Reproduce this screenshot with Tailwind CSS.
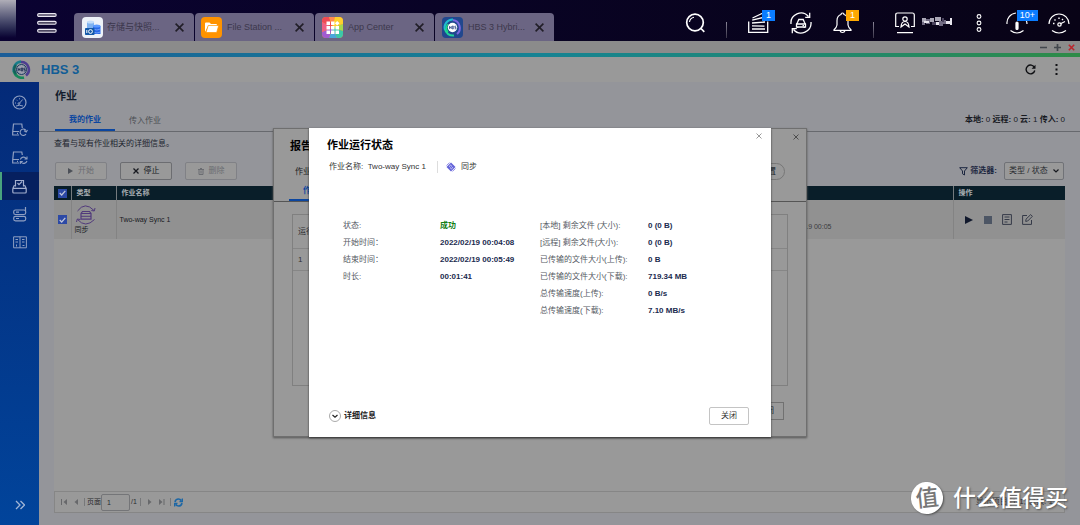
<!DOCTYPE html>
<html lang="zh-CN">
<head>
<meta charset="utf-8">
<meta name="viewport" content="width=device-width, initial-scale=1">
<title>HBS 3 Hybrid Backup Sync</title>
<script src="https://cdn.jsdelivr.net/npm/@tailwindcss/browser@4"></script>
</head>
<body class="relative flex h-screen flex-col overflow-hidden bg-[#94959a] font-['Liberation_Sans','Noto_Sans_CJK_SC',sans-serif] text-[8px] leading-3 text-[#17191f]">

<header class="flex h-[41px] shrink-0 bg-linear-to-r from-[#0a0231] to-[#080316]">
  <div class="h-[38px] w-4 bg-linear-to-b from-[#b0aeb8] to-[#0a0231]"></div>
  <button aria-label="主菜单" class="ml-[21px] mr-[17px] mt-1 w-5">
    <svg viewBox="0 0 20 22" class="h-[22px] w-5" fill="#4b4660" stroke="#e9e7f0" stroke-width="1.1"><rect x=".6" y="1.6" width="18.6" height="2.8" rx="1.4"/><rect x=".6" y="9.4" width="18.6" height="2.8" rx="1.4"/><rect x=".6" y="17.4" width="18.6" height="2.8" rx="1.4"/></svg>
  </button>
  <nav class="flex gap-px self-end text-[9px] text-[#3c374c]">
    <div class="flex h-7 w-[120px] items-center rounded-t bg-[#6b6583] pl-2 pr-2">
      <svg viewBox="0 0 21 21" class="size-[21px]"><rect width="21" height="21" rx="4" fill="#eef2f8"/><path d="M5 5v11h7V5z" fill="#7fb2f0"/><ellipse cx="8.500" cy="5" rx="3.500" ry="1.500" fill="#c3ddfa"/><path d="M11 9v8h7.500V9z" fill="#2868e8"/><ellipse cx="14.700" cy="9" rx="3.700" ry="1.500" fill="#5c9aff"/><path d="M11 12q4 2 7.500 0M11 15q4 2 7.500 0" stroke="#9cc2ff" fill="none" stroke-width=".6"/><rect x="3" y="11" width="9.500" height="7" rx=".8" fill="#1459a8"/><circle cx="8.500" cy="14.500" r="1.900" fill="none" stroke="#fff"/><path d="M4.800 13v3" stroke="#fff"/></svg>
      <span class="ml-1 flex-1">存储与快照...</span>
      <button aria-label="关闭标签页"><svg viewBox="0 0 9 9" class="mr-[2px] size-[9px]" stroke="#211e28" stroke-width="1.600"><path d="M.6.6l7.800 7.800M8.400.6.6 8.400"/></svg></button>
    </div>
    <div class="flex h-7 w-[119px] items-center rounded-t bg-[#6b6583] pl-[6px] pr-2">
      <svg viewBox="0 0 21 21" class="size-[21px]"><rect width="21" height="21" rx="4" fill="#ff9300"/><path d="M4 15V6.500Q4 5.500 5 5.500h3.500L10 7h5q1 0 1 1v1.200H7z" fill="#fff"/><path d="M7.200 8.500h10.500l-2 7H5z" fill="#fff" stroke="#ff9300" stroke-width=".7"/></svg>
      <span class="ml-[5px] flex-1">File Station ...</span>
      <button aria-label="关闭标签页"><svg viewBox="0 0 9 9" class="mr-[2px] size-[9px]" stroke="#211e28" stroke-width="1.600"><path d="M.6.6l7.800 7.800M8.400.6.6 8.400"/></svg></button>
    </div>
    <div class="flex h-7 w-[119px] items-center rounded-t bg-[#6b6583] pl-[7px] pr-2">
      <svg viewBox="0 0 21 21" class="size-[21px] rounded"><rect width="21" height="21" fill="#ff8c2e"/><path d="M10.500 10.500 0 5V0h7z" fill="#ef4a55"/><path d="M10.500 10.500 7 0h6z" fill="#ff8a50"/><path d="M10.500 10.500 13 0h8v7z" fill="#ffd02c"/><path d="M10.500 10.500 21 7v7z" fill="#a6d84e"/><path d="M10.500 10.500 21 14v7h-6z" fill="#3bc8a8"/><path d="M10.500 10.500 15 21H7z" fill="#4aa7dc"/><path d="M10.500 10.500 7 21H0v-6z" fill="#a15bd0"/><path d="M10.500 10.500 0 15V5z" fill="#ee5f83"/><g fill="#fff"><path d="M4.500 4.500h3.500v3.500H4.500zM9 4.500h3.500v3.500H9zM4.500 9h3.500v3.500H4.500zM9 9h3.500v3.500H9zM13.500 9H17v3.500h-3.500zM4.500 13.500h3.500V17H4.500zM9 13.500h3.500V17H9zM13.500 13.500H17V17h-3.500zM15.200 3.900l2.300 2.300-2.300 2.300-2.300-2.300z"/></g></svg>
      <span class="ml-[5px] flex-1">App Center</span>
      <button aria-label="关闭标签页"><svg viewBox="0 0 9 9" class="mr-[2px] size-[9px]" stroke="#211e28" stroke-width="1.600"><path d="M.6.6l7.800 7.800M8.400.6.6 8.400"/></svg></button>
    </div>
    <div class="flex h-7 w-[119px] items-center rounded-t bg-[#6b6583] pl-[7px] pr-2">
      <svg viewBox="0 0 21 21" class="size-[21px]"><rect width="21" height="21" rx="4" fill="#21478e"/><g fill="none" stroke-width="2"><path d="M3 13A8 8 0 0 1 11 2.500" stroke="#21bcd0"/><path d="M3 12a8 8 0 0 0 9 6.500" stroke="#20d49a"/><path d="M11 3a8 8 0 0 1 4 14" stroke="#7b67df"/><path d="M6 15a6.500 6.500 0 0 1 0-8" stroke="#19dd80" stroke-width="1.400"/></g><circle cx="10.500" cy="10.500" r="4.700" fill="#fff"/><path d="M7.500 9v3M9.200 9v3M7.500 10.500h1.700M10.300 9v3h1V9zM14 9.200h-1.200v1.200H14v1.400h-1.400" stroke="#223a80" stroke-width=".7" fill="none"/></svg>
      <span class="ml-[5px] flex-1">HBS 3 Hybri...</span>
      <button aria-label="关闭标签页"><svg viewBox="0 0 9 9" class="mr-[2px] size-[9px]" stroke="#211e28" stroke-width="1.600"><path d="M.6.6l7.800 7.800M8.400.6.6 8.400"/></svg></button>
    </div>
  </nav>

  <div class="ml-auto flex pr-[10px] pt-3 text-white">
    <button aria-label="搜索" class="h-[21px] w-5"><svg viewBox="0 0 20 21" class="h-[21px] w-5" fill="none" stroke="currentColor" stroke-width="1.700"><circle cx="10" cy="10.500" r="8.300"/><path d="M16 16.500l3.300 3.300"/><path d="M4.500 10A5.500 5.500 0 0 1 9 5.200" stroke-width="1.100"/></svg></button>
    <span class="ml-[21px] mt-[10px] h-4 w-px bg-linear-to-b from-[#8b8798] to-[#3a3548]"></span>
    <button aria-label="后台任务" class="relative ml-[21px] h-[22px] w-[21px]"><svg viewBox="0 0 21 22" class="h-[22px] w-[21px]" fill="none" stroke="currentColor" stroke-width="1.300"><path d="M.7 9.500v10.800h19V9.500"/><path d="M4 17h13M4 13.900l12.500.2M4 11l13-1M4.200 8.200 17 5M4.500 6 15 1"/></svg><span class="absolute -top-[2px] left-[14px] h-[11px] w-[13px] bg-[#0a7cff] text-center text-[9px] leading-[11px]">1</span></button>
    <button aria-label="外部设备" class="ml-[21px] h-[22px] w-[22px]"><svg viewBox="0 0 22 22" class="size-[22px]" fill="none" stroke="currentColor" stroke-width="1.300"><path d="M1 12A10 10 0 0 1 18.500 4.500M19.700.8v4.500h-4.500M21 10A10 10 0 0 1 3.500 17.500M2.300 21.200v-4.500h4.500"/><path d="M7.500 10.500 8.800 7.500h4.400l1.300 3 1 1.500v3h-9v-3zM7 12h8"/><path d="M12.500 13.700h1.500M7.800 15v1M14.200 15v1"/></svg></button>
    <button aria-label="通知" class="relative ml-[21px] h-[22px] w-[19px]"><svg viewBox="0 0 19 22" class="h-[22px] w-[19px]" fill="none" stroke="currentColor" stroke-width="1.200"><path d="M8 2.500Q8 1 9.500 1T11 2.500q4 1.500 4 6V13q.5 3 3 4.700v.7H1v-.7Q3.500 16 4 13V8.500q0-4.500 4-6zM7 18.500q.5 2 2.500 2t2.500-2"/></svg><span class="absolute -top-[2px] left-[13px] h-[11px] w-[13px] bg-[#ffa800] text-center text-[9px] leading-[11px]">1</span></button>
    <span class="ml-[21px] mt-[10px] h-4 w-px bg-linear-to-b from-[#8b8798] to-[#3a3548]"></span>
    <button aria-label="用户" class="ml-[21px] flex"><svg viewBox="0 0 20 22" class="h-[22px] w-5" fill="none" stroke="currentColor" stroke-width="1.200"><path d="M4 14.500H.7V3q0-2 2-2h14.600q2 0 2 2v11.500H16M2 20.700h16"/><circle cx="10" cy="7" r="2.200"/><path d="M6 15q.3-5.500 4-5.500t4 5.500l-4-3z"/></svg>
      <svg viewBox="0 0 32 12" class="ml-[7px] mt-1 h-3 w-8"><path fill="#aaa7b6" d="M0 2h4v4H0zM8 2h4v4H8zM13 1h6v4h-6z"/><path fill="#716b83" d="M4 3h4v5H4zM0 6h3v3H0zM17 5h4v5h-4zM21 4h3v4h-3z"/><path fill="#e7e5ed" d="M2 5h5v2H2zM14 6h3v3h-3zM24 5h4v3h-4zM28 2h2v7h-2z"/><path fill="#4a435d" d="M10 6h4v3h-4zM20 2h2v4h-2z"/></svg></button>
    <button aria-label="更多" class="ml-[22px] h-[22px] w-[6px]"><svg viewBox="0 0 6 22" class="h-[22px] w-[6px]" fill="none" stroke="currentColor" stroke-width="1.100"><circle cx="3" cy="4.500" r="1.900"/><circle cx="3" cy="11" r="1.900"/><circle cx="3" cy="17.500" r="1.900"/></svg></button>
    <button aria-label="信息" class="relative ml-6 h-[22px] w-[22px]"><svg viewBox="0 0 22 22" class="size-[22px]" fill="none" stroke="currentColor" stroke-width="1.200"><path d="M1 12A10 10 0 0 1 10 1M21 12q0-2-1-4M4.500 18.500q6.500 5 13 0"/><rect x="10" y="10" width="2" height="7.500" rx="1" fill="#fff"/></svg><span class="absolute -top-[2px] left-[11px] h-[11px] w-[21px] bg-[#0a7cff] text-center text-[9px] leading-[11px]">10+</span></button>
    <button aria-label="仪表板" class="ml-5 h-[22px] w-[22px]"><svg viewBox="0 0 22 22" class="size-[22px]" fill="none" stroke="currentColor" stroke-width="1.200"><path d="M1 12a10 10 0 1 1 20 0M4 18.500q7 5 14 0"/><path d="M5 11.500h1.500M6.500 7.500l1 1M11 5.500V7M15 7l-1 1" stroke-width="1.400"/><path d="m12 12 5-2.500"/><circle cx="11.500" cy="12.500" r="1.700"/></svg></button>
  </div>
</header>

<div class="flex h-3 shrink-0 items-center justify-end gap-[7px] bg-[#8b8b8b] pr-[5px] text-[#42474d]">
  <button aria-label="最小化"><svg viewBox="0 0 7 7" class="size-[7px]" stroke="currentColor" stroke-width="1.500"><path d="M0 3.500h7"/></svg></button>
  <button aria-label="最大化"><svg viewBox="0 0 7 7" class="size-[7px]" stroke="currentColor" stroke-width="1.700"><path d="M0 3.500h7M3.500 0v7"/></svg></button>
  <button aria-label="关闭窗口" class="text-[#b9262d]"><svg viewBox="0 0 7 7" class="size-[7px]" stroke="currentColor" stroke-width="1.600"><path d="M.8.8l5.400 5.400M6.200.8.8 6.200"/></svg></button>
</div>
<div class="h-1 shrink-0 bg-linear-to-r from-[#1b5d98] via-[#168393] to-[#2e8b47]"></div>
<div class="flex h-[25px] shrink-0 items-center bg-[#999] pl-3 pr-[19px]">
  <svg viewBox="0 0 19 19" class="size-[19px]" fill="none"><g stroke-width="2.600"><path d="M2 12A8 8 0 0 1 9 1.600" stroke="#197d8b"/><path d="M2 11a8 8 0 0 0 10 6.500" stroke="#16885b"/><path d="M9 2a7.600 7.600 0 0 1 5 13.500" stroke="#4d3e90"/><path d="M4 14a7 7 0 0 1 0-9" stroke="#14605c"/></g><circle cx="9.500" cy="9.500" r="5" fill="#9b9eac" stroke="#173a63"/><path d="M6.200 8v3M8 8v3M6.200 9.500H8M9.400 8v3h1.200V8zM13.200 8.200h-1.400v1.300h1.400V11h-1.500" stroke="#17284f" stroke-width=".8"/></svg>
  <h1 class="ml-[10px] text-[13px] font-bold leading-4 text-[#125d96]">HBS 3</h1>
  <button aria-label="刷新" class="ml-auto text-[#101114]"><svg viewBox="0 0 11 11" class="size-[11px]" fill="none" stroke="currentColor" stroke-width="1.400"><path d="M9.500 3.500a4.400 4.400 0 1 0 .3 3"/><path d="M10.500.8V4.700H6.600z" fill="currentColor" stroke="none"/></svg></button>
  <button aria-label="更多选项" class="ml-4 text-[#101114]"><svg viewBox="0 0 9 11" class="h-[11px] w-[9px]" fill="currentColor"><path d="M3.500 0h2v2h-2zM3.500 4.500h2v2h-2zM3.500 9h2v2h-2z"/></svg></button>
</div>

<div class="flex min-h-0 flex-1">
  <aside class="flex w-[39px] shrink-0 flex-col bg-linear-to-b from-[#042a78] to-[#01449b] pt-[6px] text-[#8f9fc2]">
    <a href="#overview" aria-label="概览" class="flex h-7 items-center justify-center"><svg viewBox="0 0 15 15" class="size-[15px]" fill="none" stroke="currentColor"><circle cx="7.500" cy="7.500" r="6.500" stroke-width="1.200"/><path d="M3 8h1M4.500 4.800l.7.7M7.500 3.300v1M7.200 8.500l3.500-4M4 11q3.500-1.500 7 0"/><circle cx="7" cy="8.600" r=".9"/></svg></a>
    <a href="#backup" aria-label="备份与还原" class="flex h-7 items-center justify-center"><svg viewBox="0 0 16 14" class="h-[14px] w-4" fill="none" stroke="currentColor"><path d="M7 12H.7V9L1.500 1h8.300l.5 4M.7 8.500H7M5 10.300h1" stroke-width="1.200"/><path d="M14 7.500A3.200 3.200 0 1 0 14 11M15.500 7l-1.300 2L12 7.700" stroke-width="1.100"/></svg></a>
    <a href="#sync" aria-label="同步" class="flex h-7 items-center justify-center"><svg viewBox="0 0 16 14" class="h-[14px] w-4" fill="none" stroke="currentColor"><path d="M7 12H.7V9L1.500 1h8.300l.5 3M.7 8.500H7M5 10.300h1" stroke-width="1.200"/><path d="M8.300 8.500a3.400 3.400 0 0 1 6-1M15 5.500V8h-2.500M15 10a3.400 3.400 0 0 1-6 1M8.300 13v-2.500h2.500" stroke-width="1.100"/></svg></a>
    <a href="#jobs" aria-label="作业" aria-current="page" class="flex h-7 items-center justify-center border-l-2 border-[#49a37d] bg-[#06205f] pr-[2px] text-[#a4afcf]"><svg viewBox="0 0 15 15" class="size-[15px]" fill="none" stroke="currentColor"><path d="M3.500 7.500v-6h8v6M5.500 4 7 5.700l3-3.200" stroke-width="1.200"/><path d="M.8 9.500V13q0 1 1 1h11.400q1 0 1-1V9.500L12.500 6M.8 9.500 2.500 6M.8 9.300h13.400" stroke-width="1.200"/></svg></a>
    <a href="#storage" aria-label="存储空间" class="flex h-7 items-center justify-center"><svg viewBox="0 0 14 15" class="h-[15px] w-[14px]" fill="none" stroke="currentColor" stroke-width="1.200"><rect x=".7" y="3" width="12" height="4.500" rx="1.800"/><rect x=".7" y="9.300" width="12" height="4.500" rx="1.800"/><path d="M12.500 0v4M3 5.200h3M3 11.500h3"/></svg></a>
    <a href="#services" aria-label="服务" class="flex h-7 items-center justify-center"><svg viewBox="0 0 14 13" class="h-[13px] w-[14px]" fill="none" stroke="currentColor"><path d="M.6.8h12.800v11H.6zM7 .8v11M2.500 3.500h2.500M2.500 6h2.500M9 3.500h2.500M9 6h2.500M3.500 8.500v2M9.500 9.500h2"/></svg></a>
    <button aria-label="展开侧栏" class="mx-auto mb-[15px] mt-auto"><svg viewBox="0 0 10 10" class="size-[10px]" fill="none" stroke="#a0b5d6" stroke-width="1.300"><path d="m1 1 4 4-4 4M5.500 1l4 4-4 4"/></svg></button>
  </aside>

  <main class="flex min-w-0 flex-1 flex-col">
    <h2 class="pl-4 pt-[6px] text-[11px] font-bold leading-4 text-[#131c2c]">作业</h2>
    <div class="flex h-7 items-end border-b border-[#67696e]">
      <div class="ml-4 flex text-[#4a4d52]">
        <button class="h-[18px] w-[60px] border-b-2 border-[#0b46a0] pb-[2px] font-bold text-[#0b46a0]">我的作业</button>
        <button class="h-[18px] w-[60px] pb-[2px]">传入作业</button>
      </div>
      <p class="mb-[5px] ml-auto pr-[15px]"><b>本地:</b> 0 <b>远程:</b> 0 <b>云:</b> 1 <b>传入:</b> 0</p>
    </div>
    <div class="flex min-h-0 flex-1 flex-col pb-3 pl-[15px] pr-[15px]">
      <p class="pt-[6px] text-[#20242e]">查看与现有作业相关的详细信息。</p>
      <div class="mt-3 flex h-[18px] items-center">
        <button disabled class="ml-px flex h-[18px] w-[52px] items-center justify-center gap-[5px] rounded-xs border border-[#808186] bg-[#999] text-[#6b6d72]"><svg viewBox="0 0 5 6" class="h-[6px] w-[5px]" fill="#4c5058"><path d="M0 0l5 3-5 3z"/></svg>开始</button>
        <button class="ml-[13px] flex h-[18px] w-[52px] items-center justify-center gap-[5px] rounded-xs border border-[#6c6d71] bg-[#999] text-[#17191f]"><svg viewBox="0 0 6 6" class="size-[6px]" stroke="currentColor" stroke-width="1.300"><path d="M.5.5l5 5M5.500.5l-5 5"/></svg>停止</button>
        <button disabled class="ml-[13px] flex h-[18px] w-[52px] items-center justify-center gap-[5px] rounded-xs border border-[#808186] bg-[#999] text-[#6b6d72]"><svg viewBox="0 0 6 7" class="h-[7px] w-[6px]" fill="none" stroke="currentColor"><path d="M0 1.500h6M2 .5h2M1 2v4.500h4V2M3 2.500v3"/></svg>删除</button>
        <label for="filter" class="ml-auto flex items-center gap-[2px] font-bold text-[#1c2740]"><svg viewBox="0 0 9 9" class="size-[9px]" fill="none" stroke="currentColor"><path d="M.7.7h7.600L5.500 4v4l-2-1.200V4z"/></svg>筛选器:</label>
        <div class="relative ml-[7px] mr-px">
          <select id="filter" class="h-[18px] w-[60px] appearance-none rounded-xs border border-[#707277] bg-[#999] pl-1 text-[8px] text-[#2a2c31]"><option>类型 / 状态</option></select>
          <svg viewBox="0 0 6 4" class="pointer-events-none absolute right-[5px] top-[7px] h-1 w-[6px]" fill="none" stroke="#17191f" stroke-width="1.200"><path d="M.5.5 3 3 5.500.5"/></svg>
        </div>
      </div>
      <div class="mt-[6px] flex min-h-0 flex-1 flex-col bg-[#999]">
        <table class="w-full table-fixed border-collapse text-[7px] leading-[10px]">
          <colgroup><col class="w-[17px]"><col class="w-[45px]"><col><col class="w-[200px]"><col class="w-[112px]"></colgroup>
          <thead class="bg-[#091e29] text-left text-[#a9b0b4]">
            <tr class="h-[14px]">
              <th class="p-0"><input type="checkbox" id="all" aria-label="全选" checked class="peer sr-only"><label for="all" class="mx-auto flex size-[9px] items-center justify-center bg-[#2c49a5]"><svg viewBox="0 0 7 6" class="h-[6px] w-[7px]" fill="none" stroke="#c2c7da" stroke-width="1.200"><path d="m.7 3 2 2L6.300.8"/></svg></label></th>
              <th class="border-l border-[#747a7e] p-0 pl-[5px]">类型</th>
              <th class="border-l border-[#747a7e] p-0 pl-[5px]">作业名称</th>
              <th class="p-0"></th>
              <th class="border-l border-[#747a7e] p-0 pl-[5px]">操作</th>
            </tr>
          </thead>
          <tbody class="bg-[#919191]">
            <tr class="h-[39px]">
              <td class="p-0"><input type="checkbox" id="job1" aria-label="选择 Two-way Sync 1" checked class="peer sr-only"><label for="job1" class="mx-auto flex size-[9px] items-center justify-center bg-[#2c49a5]"><svg viewBox="0 0 7 6" class="h-[6px] w-[7px]" fill="none" stroke="#c2c7da" stroke-width="1.200"><path d="m.7 3 2 2L6.300.8"/></svg></label></td>
              <td class="border-l border-[#838383] p-0 pl-[3px]">
                <svg viewBox="0 0 22 20" class="h-5 w-[22px]" fill="none" stroke="#513a7c"><path d="M2.500 6Q10-4 19 5.500M20 3l-.7 3-3-.5M2.500 14.500q8 9 17 0M1.500 17l.8-3 3 .5" stroke-width="1"/><path d="M6 8.500 7.500 6.500h7L16 8.500v5.700H6zM6 8.500h10" stroke-width="1.200"/><path d="M6 11.300h10" stroke-width="1"/></svg>
                <span class="block">同步</span>
              </td>
              <td class="border-l border-[#838383] p-0 pl-[3px]">Two-way Sync 1</td>
              <td class="p-0 pr-[121px] pt-[14px] text-right text-[#3b3c40]"><time class="block whitespace-nowrap">2022/02/19 00:05</time></td>
              <td class="border-l border-[#838383] p-0 pl-[10px]">
                <div class="flex items-center gap-[11px]">
                  <button aria-label="开始"><svg viewBox="0 0 9 8" class="h-2 w-[9px]" fill="#11182c"><path d="M1 0l8 4-8 4z"/></svg></button>
                  <button aria-label="停止"><svg viewBox="0 0 8 8" class="size-2" fill="#4c5564"><path d="M0 0h8v8H0z"/></svg></button>
                  <button aria-label="报告" class="-ml-px"><svg viewBox="0 0 10 11" class="h-[11px] w-[10px]" fill="none" stroke="#353a48"><path d="M.6.6h8.800v9.800H.6zM2.500 3h5M2.500 5.500h5M2.500 8h3"/></svg></button>
                  <button aria-label="编辑" class="-ml-px"><svg viewBox="0 0 11 11" class="size-[11px]" fill="none" stroke="#353a48"><path d="M5 1.500H.6v8.900h8.900V6M4 5.200 8.700.6l1.700 1.700L5.700 7 3.700 7.400z"/></svg></button>
                </div>
              </td>
            </tr>
          </tbody>
        </table>
        <div class="mt-auto flex h-[22px] items-center border border-[#868686] px-[6px] text-[7px] text-[#2a2b2e]">
          <button aria-label="首页" class="text-[#67686b]"><svg viewBox="0 0 7 6" class="h-[6px] w-[7px]" fill="currentColor"><path d="M0 0h1v6H0zM6 0 2.500 3 6 6z"/></svg></button>
          <button aria-label="上一页" class="ml-[6px] text-[#67686b]"><svg viewBox="0 0 5 6" class="h-[6px] w-[5px]" fill="currentColor"><path d="M4 0 .5 3 4 6z"/></svg></button>
          <span class="ml-[5px] h-2 w-px bg-[#77787a]"></span>
          <label for="page" class="ml-[2px]">页面</label>
          <input id="page" value="1" class="h-[17px] w-[29px] rounded-xs border border-[#747578] pl-[5px] text-[7px]">
          <span class="ml-px">/1</span>
          <span class="ml-[3px] h-2 w-px bg-[#77787a]"></span>
          <button aria-label="下一页" class="ml-[6px] text-[#67686b]"><svg viewBox="0 0 5 6" class="h-[6px] w-[5px]" fill="currentColor"><path d="M1 0l3.500 3L1 6z"/></svg></button>
          <button aria-label="末页" class="ml-[6px] text-[#67686b]"><svg viewBox="0 0 7 6" class="h-[6px] w-[7px]" fill="currentColor"><path d="M1 0l3.500 3L1 6zM5.500 0h1v6h-1z"/></svg></button>
          <span class="ml-[5px] h-2 w-px bg-[#77787a]"></span>
          <button aria-label="重新载入" class="ml-[3px]"><svg viewBox="0 0 9 9" class="size-[9px]" fill="none" stroke="#1d67a5" stroke-width="1.600"><path d="M1 4q.5-3 3.500-3 1.700 0 2.800 1.500M8.500.5v3h-3M8 5q-.5 3-3.500 3-1.700 0-2.800-1.500M.5 8.500v-3h3"/></svg></button>
          <span class="ml-auto pr-[5px] text-[8px]">显示项目: 1-1, 总数: 1</span>
        </div>
      </div>
    </div>
  </main>
</div>

<div class="absolute inset-x-0 top-32 flex justify-center">
  <section aria-label="报告" class="flex h-[309px] w-[534px] flex-col border border-[#6f6f6f] bg-[#999] shadow-[0_1px_2px_#555]">
    <div class="flex items-start pl-4 pr-[7px]">
      <h2 class="pt-[9px] text-[11px] font-bold leading-4 text-black">报告</h2>
      <button aria-label="关闭报告" class="ml-auto pt-[5px]"><svg viewBox="0 0 6 6" class="size-[6px]" stroke="#4d4d4d"><path d="M.5.5l5 5M5.500.5l-5 5"/></svg></button>
    </div>
    <div class="mt-[9px] flex h-[17px] items-center px-[21px]"><span>作业</span><button class="ml-auto h-[17px] w-[52px] rounded-full border border-[#777] pr-2 text-right">设置</button></div>
    <div class="mt-[3px] flex h-[19px] border-b border-[#555] pl-[15px]"><button class="w-[60px] border-b-2 border-[#0b46a0] text-center font-bold text-[#0b46a0]">作业报告</button></div>
    <div class="mx-[18px] mt-3 h-[172px] border border-[#808080] text-[#303134]">
      <div class="flex h-[34px] items-center border-b border-[#868686] pl-[5px]">运行</div>
      <div class="flex h-[22px] items-center border-b border-[#868686] pl-[5px]">1</div>
    </div>
    <button class="ml-auto mr-[22px] mt-4 h-[18px] w-10 shrink-0 border border-[#717171] pl-1">关闭</button>
  </section>
</div>

<div class="absolute inset-x-0 top-32 flex justify-center">
  <section role="dialog" aria-labelledby="status-title" class="flex h-[309px] w-[462px] flex-col bg-white shadow-[0_1px_2px_#333]">
    <div class="flex items-start pl-[18px] pr-[9px]">
      <h2 id="status-title" class="pt-[9px] text-[11px] font-bold leading-4 text-black">作业运行状态</h2>
      <button aria-label="关闭对话框" class="ml-auto pt-[5px]"><svg viewBox="0 0 6 6" class="size-[6px]" stroke="#999"><path d="M.5.5l5 5M5.500.5l-5 5"/></svg></button>
    </div>
    <div class="mt-2 flex items-center pl-5 text-[8px] text-[#333]">
      <span>作业名称: &nbsp;Two-way Sync 1</span>
      <span class="ml-[11px] h-3 w-px bg-[#ddd]"></span>
      <svg viewBox="0 0 10 10" class="ml-2 size-[10px]"><path d="M5 .5 9.500 5 5 9.500.5 5z" fill="#6464d8"/><path d="M3 4.700 4.600 3.200 6 4.500M7 5.300 5.400 6.800 4 5.500" stroke="#dcdcff" stroke-width=".9" fill="none"/><path d="M.5 3.500 3.500.7M9.500 6.500 6.500 9.300" stroke="#8f8ce8"/></svg>
      <span class="ml-[5px]">同步</span>
    </div>
    <div class="mt-11 flex pl-[34px] leading-[17px]">
      <dl class="grid w-[197px] grid-cols-[97px_1fr] content-start">
        <dt class="text-[#555a63]">状态:</dt><dd class="font-bold text-[#138013]">成功</dd>
        <dt class="text-[#555a63]">开始时间：</dt><dd class="font-bold text-[#1b2b4f]">2022/02/19 00:04:08</dd>
        <dt class="text-[#555a63]">结束时间：</dt><dd class="font-bold text-[#1b2b4f]">2022/02/19 00:05:49</dd>
        <dt class="text-[#555a63]">时长:</dt><dd class="font-bold text-[#1b2b4f]">00:01:41</dd>
      </dl>
      <dl class="grid flex-1 grid-cols-[108px_1fr] content-start">
        <dt class="text-[#555a63]">[本地] 剩余文件 (大小):</dt><dd class="font-bold text-[#1b2b4f]">0 (0 B)</dd>
        <dt class="text-[#555a63]">[远程] 剩余文件(大小):</dt><dd class="font-bold text-[#1b2b4f]">0 (0 B)</dd>
        <dt class="text-[#555a63]">已传输的文件大小(上传):</dt><dd class="font-bold text-[#1b2b4f]">0 B</dd>
        <dt class="text-[#555a63]">已传输的文件大小(下载):</dt><dd class="font-bold text-[#1b2b4f]">719.34 MB</dd>
        <dt class="text-[#555a63]">总传输速度(上传):</dt><dd class="font-bold text-[#1b2b4f]">0 B/s</dd>
        <dt class="text-[#555a63]">总传输速度(下载):</dt><dd class="font-bold text-[#1b2b4f]">7.10 MB/s</dd>
      </dl>
    </div>
    <div class="mb-3 mt-auto flex items-center pl-5 pr-[22px]">
      <button class="flex items-center gap-[3px] font-bold text-[#222]"><svg viewBox="0 0 12 12" class="size-3" fill="none"><circle cx="6" cy="6" r="5.500" stroke="#aaa"/><path d="M3.500 5 6 7.300 8.500 5" stroke="#222" stroke-width="1.200"/></svg>详细信息</button>
      <button class="ml-auto h-[18px] w-10 rounded-xs border border-[#c4c4c4] text-[#333]">关闭</button>
    </div>
  </section>
</div>

<div class="pointer-events-none absolute bottom-[11px] right-3 flex items-center gap-[10px] text-white">
  <span class="flex size-8 -rotate-6 items-center justify-center rounded-full bg-white text-[23px] font-medium leading-8 text-[#777] shadow-[1px_1px_2px_#555]">值</span>
  <span class="text-[23px] font-medium leading-8 [text-shadow:1px_1px_2px_#555]">什么值得买</span>
</div>
</body>
</html>
